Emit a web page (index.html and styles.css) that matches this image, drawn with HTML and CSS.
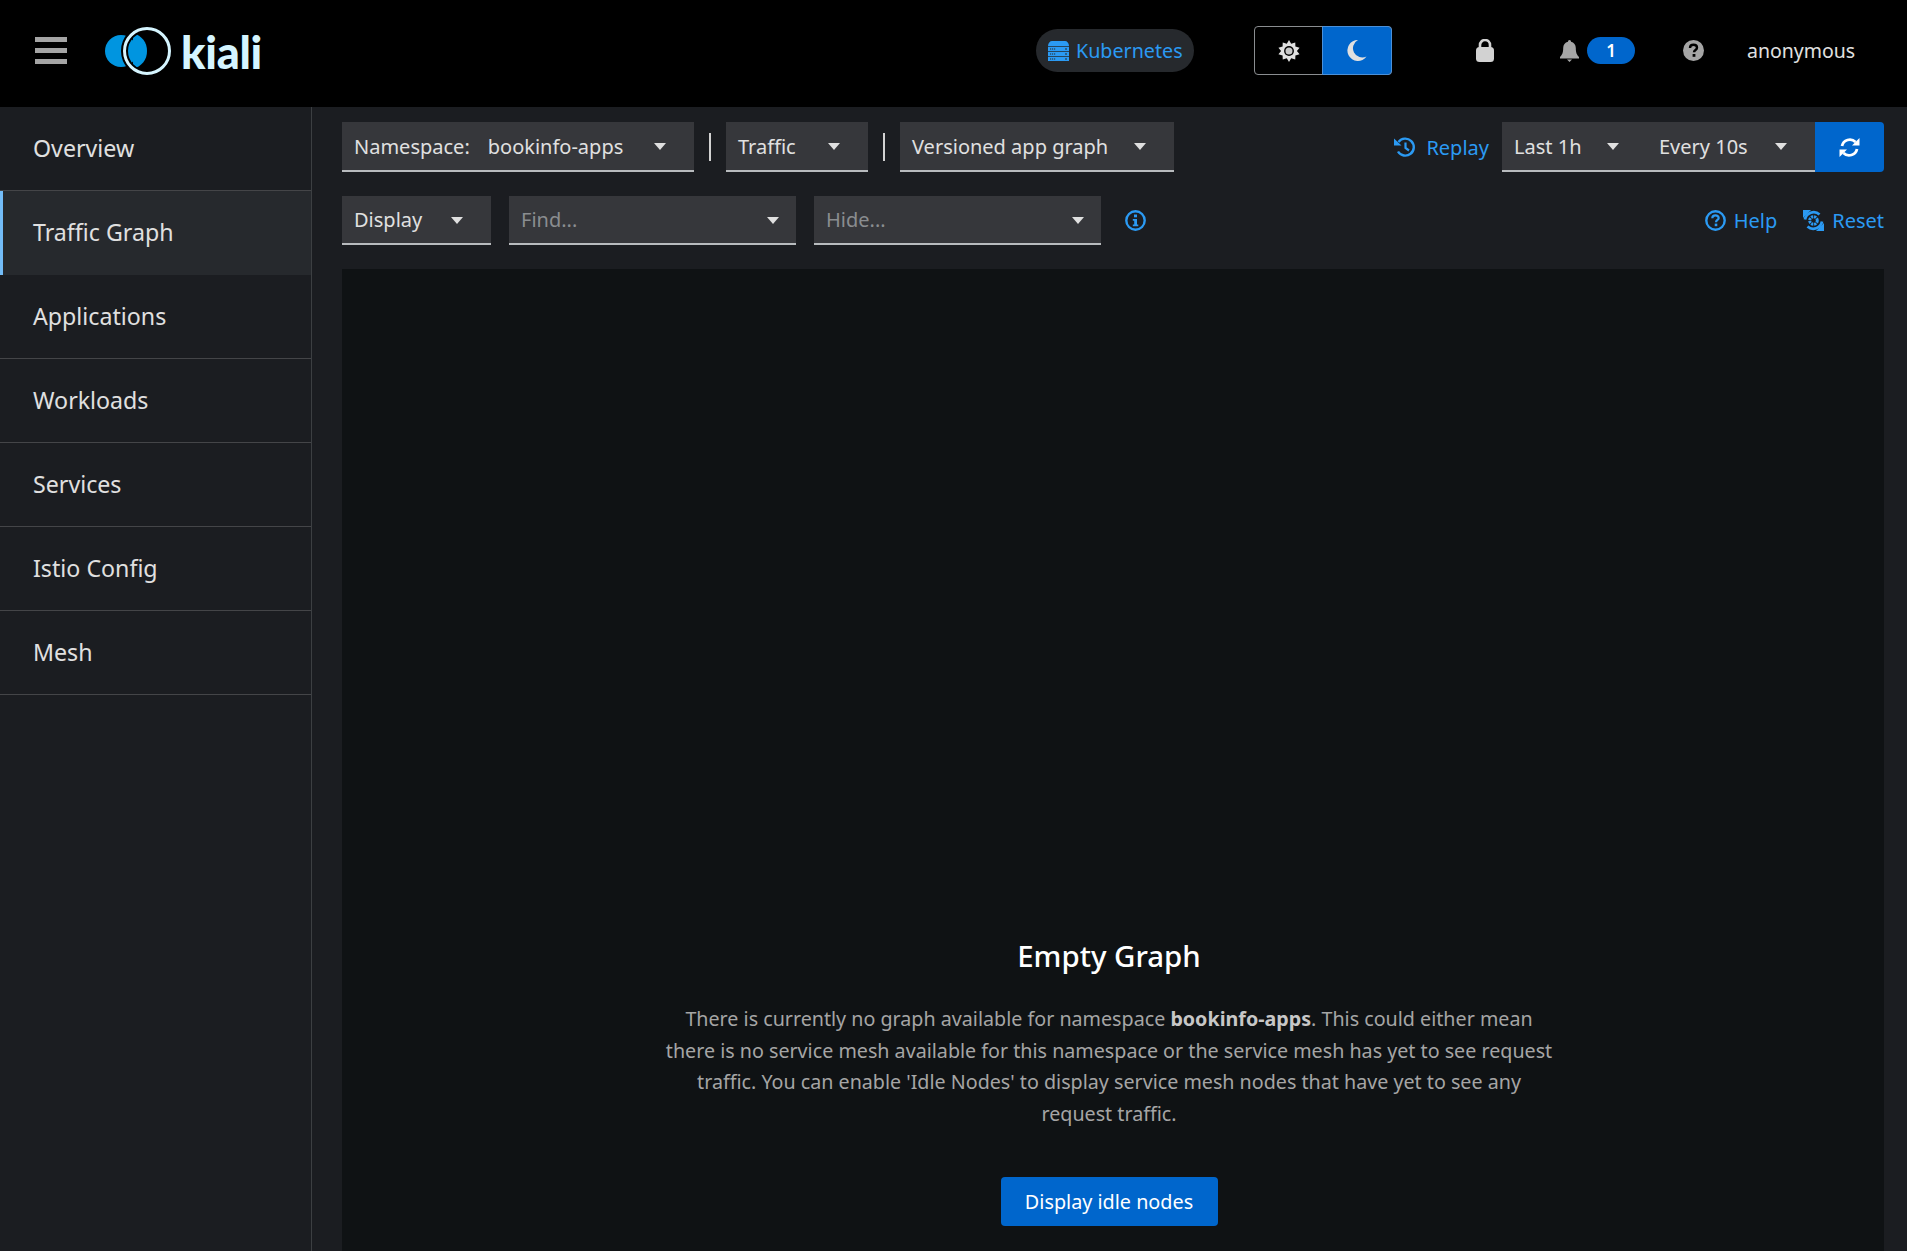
FILE: index.html
```html
<!DOCTYPE html>
<html lang="en">
<head>
    <meta charset="UTF-8">
    <title>Kiali</title>
    <link rel="stylesheet" href="styles.css">
</head>
<body>
    <!-- Masthead -->
    <header class="masthead">
        <div class="hamburger"><span></span><span></span><span></span></div>
        <div class="logo">
            <svg width="68" height="48" viewBox="0 0 68 48">
                <circle cx="18" cy="24" r="16" fill="#0095e0"/>
                <path d="M30 6C39 9 44 15 44 24C44 33 39 39 30 42Z" fill="#0095e0"/>
                <circle cx="44" cy="24" r="22.500" fill="none" stroke="#000" stroke-width="7"/>
                <circle cx="44" cy="24" r="22.500" fill="none" stroke="#d5f5ff" stroke-width="3"/>
            </svg>
            <span class="logo-text">kiali</span>
        </div>
        <div class="cluster-pill">
            <svg class="cluster-icon" width="21" height="20" viewBox="0 0 21 20">
                <path d="M4 0H17C19 0 21 2 21 5H0C0 2 2 0 4 0Z M0 5.800H21V10H0Z M0 10.800H21V15H0Z M0 15.800H21V20H0Z" fill="#2b9af3"/>
                <path d="M2 8H8 M2 13H8 M2 18H8" stroke="#26292d" stroke-width="1.200" stroke-dasharray="1.200 .8"/>
                <path d="M17 8H19 M17 13H19 M17 18H19" stroke="#26292d" stroke-width="1.200"/>
            </svg>
            <span>Kubernetes</span>
        </div>
        <div class="theme-toggle">
            <div class="theme-btn">
                <svg width="22" height="22" viewBox="0 0 20 20">
                    <path d="M10 0L12 3.500L15.700 2.200L15.800 6L19.600 7L17.200 10L19.600 13L15.800 14L15.700 17.800L12 16.500L10 20L8 16.500L4.300 17.800L4.200 14L.4 13L2.800 10L.4 7L4.200 6L4.300 2.200L8 3.500Z" fill="#e0e0e0"/>
                    <circle cx="10" cy="10" r="4.500" fill="#000"/>
                    <circle cx="10" cy="10" r="3.200" fill="#c8c8c8"/>
                </svg>
            </div>
            <div class="theme-btn active">
                <svg width="20" height="21" viewBox="0 0 20 21">
                    <path d="M11 0A10.500 10.500 0 1 0 19.500 16.500A8.800 8.800 0 0 1 11 0Z" fill="#e0e0e0"/>
                </svg>
            </div>
        </div>
        <div class="masthead-tools">
            <svg class="lock-icon" width="18" height="23" viewBox="0 0 18 23">
                <path d="M4 9V6A5 5 0 0 1 14 6V9" fill="none" stroke="#d2d2d2" stroke-width="2.600"/>
                <rect x="0" y="8" width="18" height="15" rx="3.500" fill="#d2d2d2"/>
            </svg>
            <div class="notify">
                <svg width="19" height="22" viewBox="0 0 19 22">
                    <path d="M9.500 0C8.500 0 8 .8 8 1.800C5 2.500 3.200 5 3.200 8C3.200 13 2 15 0 17V18.500H19V17C17 15 15.800 13 15.800 8C15.800 5 14 2.500 11 1.800C11 .8 10.500 0 9.500 0Z M7 19.500H12L9.500 22Z" fill="#a5a5a5"/>
                </svg>
                <span class="badge">1</span>
            </div>
            <svg class="help-icon" width="21" height="21" viewBox="0 0 21 21">
                <circle cx="10.500" cy="10.500" r="10.500" fill="#a5a5a5"/>
                <path d="M7 8C7 5.800 8.700 4.800 10.500 4.800C12.500 4.800 14 6 14 7.800C14 10 11 10 11 12.300" fill="none" stroke="#000" stroke-width="2.400"/>
                <rect x="9.600" y="14" width="2.800" height="2.800" fill="#000"/>
            </svg>
            <span class="username">anonymous</span>
        </div>
    </header>

    <div class="page">
        <!-- Sidebar -->
        <nav class="sidebar">
            <div class="nav-item">Overview</div>
            <div class="nav-item active">Traffic Graph</div>
            <div class="nav-item">Applications</div>
            <div class="nav-item">Workloads</div>
            <div class="nav-item">Services</div>
            <div class="nav-item">Istio Config</div>
            <div class="nav-item">Mesh</div>
        </nav>

        <main class="content">
            <!-- Toolbar row 1 -->
            <div class="toolbar-row first">
                <div class="select w-namespace"><span class="label">Namespace:</span><span>bookinfo-apps</span><i class="caret"></i></div>
                <div class="toolbar-divider"></div>
                <div class="select w-traffic"><span>Traffic</span><i class="caret"></i></div>
                <div class="toolbar-divider"></div>
                <div class="select w-versioned"><span>Versioned app graph</span><i class="caret"></i></div>
                <div class="toolbar-right">
                    <div class="link-btn replay">
                        <svg width="22" height="21" viewBox="0 0 22 21">
                            <path d="M4.500 5A8.500 8.500 0 1 1 4 14.500" fill="none" stroke="#2b9af3" stroke-width="2.400"/>
                            <path d="M0 1.500L7.500 8.500H0Z" fill="#2b9af3"/>
                            <path d="M11.500 5.500V11L15 13.500" fill="none" stroke="#2b9af3" stroke-width="2.200"/>
                        </svg>
                        <span>Replay</span>
                    </div>
                    <div class="select w-last"><span>Last 1h</span><i class="caret"></i></div>
                    <div class="select w-every"><span>Every 10s</span><i class="caret"></i></div>
                    <div class="refresh-btn">
                        <svg width="21" height="21" viewBox="0 0 21 21">
                            <path d="M3 9A8 8 0 0 1 16.500 5" fill="none" stroke="#fff" stroke-width="2.800"/>
                            <path d="M20.500 1V8.500H13Z" fill="#fff"/>
                            <path d="M18 12A8 8 0 0 1 4.500 16" fill="none" stroke="#fff" stroke-width="2.800"/>
                            <path d="M.5 20V12.500H8Z" fill="#fff"/>
                        </svg>
                    </div>
                </div>
            </div>

            <!-- Toolbar row 2 -->
            <div class="toolbar-row second">
                <div class="select w-display"><span>Display</span><i class="caret"></i></div>
                <div class="select w-find placeholder"><span>Find...</span><i class="caret"></i></div>
                <div class="select w-hide placeholder"><span>Hide...</span><i class="caret"></i></div>
                <svg class="info-icon" width="21" height="21" viewBox="0 0 21 21">
                    <circle cx="10.500" cy="10.500" r="9.200" fill="none" stroke="#2b9af3" stroke-width="2.400"/>
                    <rect x="9" y="4.500" width="3" height="2.800" fill="#2b9af3"/>
                    <path d="M7.800 9H12V14.500H13.300V16.300H7.800V14.500H9.200V10.800H7.800Z" fill="#2b9af3"/>
                </svg>
                <div class="toolbar-right">
                    <div class="link-btn help">
                        <svg width="21" height="21" viewBox="0 0 21 21">
                            <circle cx="10.500" cy="10.500" r="9.200" fill="none" stroke="#2b9af3" stroke-width="2.400"/>
                            <path d="M7.300 8.300C7.300 6.300 8.800 5.300 10.500 5.300C12.300 5.300 13.700 6.400 13.700 8C13.700 10 11 10 11 12.200" fill="none" stroke="#2b9af3" stroke-width="2.200"/>
                            <rect x="9.700" y="13.600" width="2.600" height="2.600" fill="#2b9af3"/>
                        </svg>
                        <span>Help</span>
                    </div>
                    <div class="link-btn reset">
                        <svg width="21" height="21" viewBox="0 0 21 21">
                            <path d="M2 9.500A8.800 8.800 0 0 1 16.500 4.500" fill="none" stroke="#2b9af3" stroke-width="2.800"/>
                            <path d="M19 11.500A8.800 8.800 0 0 1 4.500 16.500" fill="none" stroke="#2b9af3" stroke-width="2.800"/>
                            <path d="M0 0H8L0 8Z M21 21H13L21 13Z" fill="#2b9af3"/>
                            <circle cx="10.500" cy="10.500" r="3.800" fill="none" stroke="#2b9af3" stroke-width="3" stroke-dasharray="2.200 .8"/>
                        </svg>
                        <span>Reset</span>
                    </div>
                </div>
            </div>

            <!-- Graph area -->
            <section class="graph-area">
                <div class="empty-state">
                    <h1>Empty Graph</h1>
                    <p>There is currently no graph available for namespace <b>bookinfo-apps</b>. This could either mean there is no service mesh available for this namespace or the service mesh has yet to see request traffic. You can enable 'Idle Nodes' to display service mesh nodes that have yet to see any request traffic.</p>
                    <button class="primary-btn">Display idle nodes</button>
                </div>
            </section>
        </main>
    </div>
</body>
</html>
```

FILE: styles.css
```css
/* General Reset and Basic Styles */
* {
    margin: 0;
    padding: 0;
    box-sizing: border-box;
}

body {
    font-family: "Noto Sans", Arial, sans-serif;
    font-size: 20px;
    background-color: #1b1d21;
    color: #e0e0e0;
    height: 1251px;
    overflow: hidden;
}

/* Masthead */
.masthead {
    height: 107px;
    padding-bottom: 6px;
    background-color: #000;
    display: flex;
    align-items: center;
}

.hamburger {
    width: 32px;
    margin-left: 35px;
    display: flex;
    flex-direction: column;
    gap: 6px;
}

.hamburger span {
    height: 5px;
    background-color: #a5a5a5;
}

.logo {
    display: flex;
    align-items: center;
    margin-left: 36px;
    width: 160px;
}

.logo svg {
    flex: none;
    margin-right: 10px;
}

.logo-text {
    font-family: "Lato", sans-serif;
    font-weight: 900;
    font-size: 45px;
    color: #d5f5ff;
    letter-spacing: -0.3px;
    line-height: 1;
    padding-top: 4px;
}

.cluster-pill {
    margin-left: 773px;
    width: 158px;
    height: 43px;
    border-radius: 22px;
    background-color: #26292d;
    color: #2b9af3;
    font-size: 19.700px;
    display: flex;
    align-items: center;
    padding-left: 12px;
    gap: 7px;
}

.cluster-icon {
    flex: none;
}

.theme-toggle {
    margin-left: 60px;
    width: 138px;
    height: 49px;
    display: flex;
    border: 1px solid #8a8d90;
    border-radius: 4px;
}

.theme-btn {
    width: 69px;
    display: flex;
    align-items: center;
    justify-content: center;
}

.theme-btn.active {
    background-color: #06c;
    outline: 1px solid #4a90d9;
    border-radius: 0 3px 3px 0;
}

.masthead-tools {
    display: flex;
    align-items: center;
    margin-left: 84px;
}

.lock-icon {
    flex: none;
}

.notify {
    display: flex;
    align-items: center;
    margin-left: 66px;
    gap: 8px;
}

.badge {
    width: 48px;
    height: 27px;
    border-radius: 14px;
    background-color: #06c;
    color: #fff;
    font-size: 17px;
    font-weight: 600;
    text-align: center;
    line-height: 27px;
}

.help-icon {
    margin-left: 48px;
    flex: none;
}

.username {
    margin-left: 43px;
    font-size: 19.500px;
}

/* Page layout */
.page {
    display: flex;
    height: 1144px;
}

.sidebar {
    width: 312px;
    flex: none;
    background-color: #1b1d21;
    border-right: 1px solid #3c3f42;
}

.nav-item {
    height: 84px;
    padding-left: 33px;
    padding-bottom: 2px;
    display: flex;
    align-items: center;
    font-size: 23.200px;
    color: #e0e0e0;
    border-bottom: 1px solid #444548;
}

.nav-item.active {
    background-color: #26292d;
    border-left: 3px solid #73bcf7;
    padding-left: 30px;
    border-bottom: none;
}

/* Toolbars */
.content {
    flex: 1;
    display: flex;
    flex-direction: column;
    padding: 15px 23px 0 30px;
    min-width: 0;
}

.toolbar-row {
    display: flex;
    align-items: center;
}

.toolbar-row.first {
    height: 50px;
}

.toolbar-row.second {
    height: 49px;
    margin-top: 24px;
    gap: 18px;
}

.toolbar-right {
    margin-left: auto;
    display: flex;
    align-items: center;
    height: 100%;
}

.toolbar-divider {
    width: 2px;
    height: 28px;
    margin: 0 15px;
    background-color: #d2d2d2;
}

.select {
    height: 100%;
    background-color: #36373b;
    border-bottom: 2px solid #b8bbbe;
    display: flex;
    align-items: center;
    padding-left: 12px;
    position: relative;
    white-space: nowrap;
}

.select.placeholder {
    color: #8a8d90;
}

.label {
    margin-right: 18px;
}

.caret {
    position: absolute;
    right: 28px;
    top: 50%;
    margin-top: -3px;
    border-left: 6.500px solid transparent;
    border-right: 6.500px solid transparent;
    border-top: 7px solid #e0e0e0;
}

.placeholder .caret {
    right: 17px;
}

.w-namespace { width: 352px; }
.w-traffic { width: 142px; }
.w-versioned { width: 274px; }
.w-last { width: 145px; }
.w-every { width: 168px; }
.w-display { width: 149px; }
.w-find { width: 287px; }
.w-hide { width: 287px; }

.info-icon {
    margin-left: 6px;
    flex: none;
}

.link-btn {
    display: flex;
    align-items: center;
    color: #2b9af3;
}

.replay {
    gap: 10px;
    margin-right: 13px;
}

.help {
    gap: 8px;
    margin-right: 26px;
}

.reset {
    gap: 8px;
}

.refresh-btn {
    width: 69px;
    height: 100%;
    background-color: #06c;
    border-radius: 0 4px 4px 0;
    display: flex;
    align-items: center;
    justify-content: center;
}

/* Graph Area */
.graph-area {
    flex: 1;
    margin-top: 24px;
    background-color: #0f1214;
    display: flex;
    flex-direction: column;
    align-items: center;
    padding: 667px 8px 0 0;
}

.empty-state {
    width: 895px;
    text-align: center;
}

.empty-state h1 {
    font-size: 29.400px;
    font-weight: 500;
    color: #fff;
    line-height: 40px;
    margin-bottom: 27px;
}

.empty-state p {
    color: #a5a5a5;
    font-size: 19.700px;
    line-height: 31.500px;
    margin-bottom: 48px;
}

.empty-state b {
    color: #c7c7c7;
    font-weight: 700;
}

.primary-btn {
    width: 217px;
    height: 49px;
    border: none;
    border-radius: 4px;
    background-color: #06c;
    color: #fff;
    font-family: inherit;
    font-size: 19.800px;
}
```
